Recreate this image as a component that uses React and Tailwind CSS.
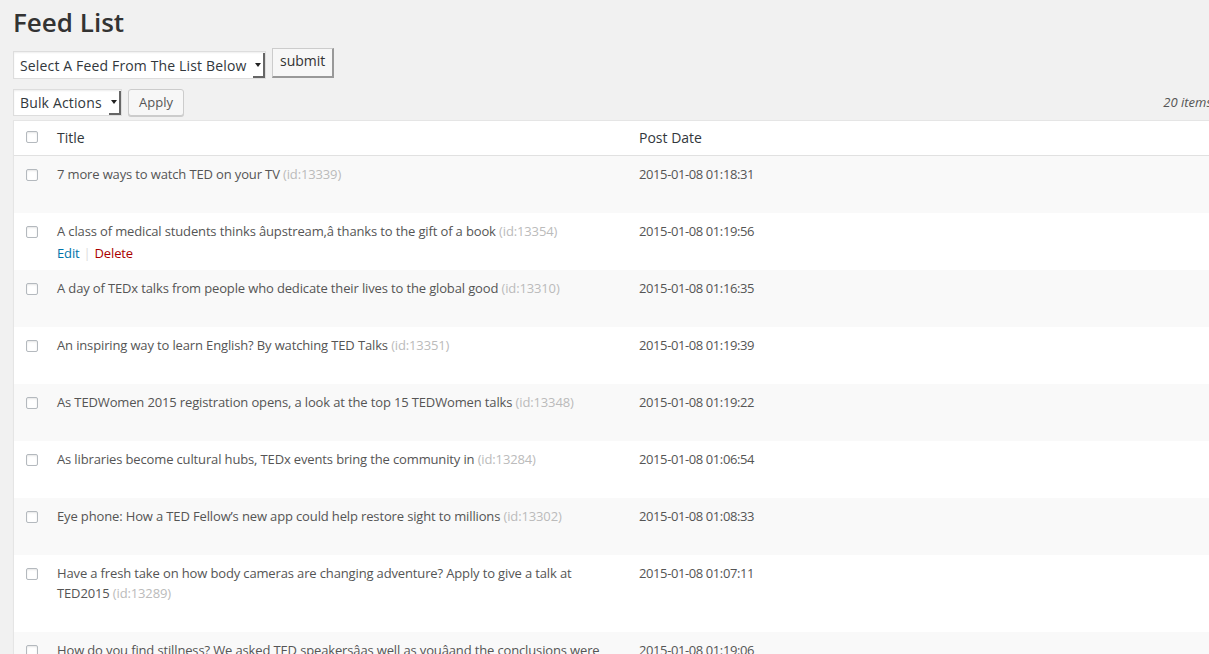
import { useState } from "react";

const feeds = [
  { title: "7 more ways to watch TED on your TV", id: 13339, date: "2015-01-08 01:18:31" },
  { title: "A class of medical students thinks âupstream,â thanks to the gift of a book", id: 13354, date: "2015-01-08 01:19:56", hover: true },
  { title: "A day of TEDx talks from people who dedicate their lives to the global good", id: 13310, date: "2015-01-08 01:16:35" },
  { title: "An inspiring way to learn English? By watching TED Talks", id: 13351, date: "2015-01-08 01:19:39" },
  { title: "As TEDWomen 2015 registration opens, a look at the top 15 TEDWomen talks", id: 13348, date: "2015-01-08 01:19:22" },
  { title: "As libraries become cultural hubs, TEDx events bring the community in", id: 13284, date: "2015-01-08 01:06:54" },
  { title: "Eye phone: How a TED Fellow’s new app could help restore sight to millions", id: 13302, date: "2015-01-08 01:08:33" },
  { title: "Have a fresh take on how body cameras are changing adventure? Apply to give a talk at TED2015", id: 13289, date: "2015-01-08 01:07:11" },
  { title: "How do you find stillness? We asked TED speakersâas well as youâand the conclusions were surprising", id: 13347, date: "2015-01-08 01:19:06" },
];

function Check() {
  return (
    <span className="block w-[12px] h-[12px] border border-[#b4b9be] rounded-[2px] bg-white shadow-[inset_0_1px_2px_rgba(0,0,0,0.1)]" />
  );
}

function FakeSelect({ label, width, height }) {
  return (
    <div className={`flex items-stretch bg-white border border-[#ddd] shadow-[inset_0_1px_2px_rgba(0,0,0,0.07)] ${width} ${height}`}>
      <span className="flex-1 pl-[6px] flex items-center text-[14px] tracking-[0.15px] text-[#32373c] whitespace-nowrap">{label}</span>
      <span className="w-[12px] flex items-center justify-center border-r-2 border-b-2 border-[#666] mt-[1px]">
        <svg width="6" height="4" viewBox="0 0 6 4">
          <path d="M0 0h6L3 4z" fill="#222" />
        </svg>
      </span>
    </div>
  );
}

export default function App() {
  const [rows] = useState(feeds);

  return (
    <div className="w-[1209px] h-[654px] overflow-hidden bg-[#f1f1f1] font-['Open_Sans',sans-serif] text-[#444]">
      <div className="ml-[13px] w-[1199px]">
        <h2 className="pt-[8px] text-[26px] leading-[29px] font-semibold text-[#333]">Feed List</h2>

        <div className="mt-[11px] flex items-start gap-[6px]">
          <div className="mt-[3px]">
            <FakeSelect label="Select A Feed From The List Below" width="w-[253px]" height="h-[28px]" />
          </div>
          <button className="h-[30px] px-[7px] bg-[#f7f7f7] border border-[#ccc] border-r-2 border-r-[#999] border-b-2 border-b-[#999] text-[14px] text-[#333] leading-none pb-[4px]">
            submit
          </button>
        </div>

        <div className="mt-[10px] flex items-center h-[27px]">
          <FakeSelect label="Bulk Actions" width="w-[109px]" height="h-[27px]" />
          <button className="ml-[6px] w-[56px] h-[27px] bg-[#f7f7f7] border border-[#ccc] rounded-[3px] shadow-[0_1px_0_#ccc] text-[13px] text-[#555]">
            Apply
          </button>
          <span className="ml-auto text-[13px] italic text-[#555]">20 items</span>
        </div>

        <div className="mt-[4px] bg-white border border-[#e5e5e5] shadow-[0_1px_1px_rgba(0,0,0,0.04)]">
          <div className="flex items-center h-[35px] pb-[2px] border-b border-[#e1e1e1]">
            <div className="w-[43px] pl-[12px]">
              <Check />
            </div>
            <div className="w-[582px] text-[14px] text-[#32373c]">Title</div>
            <div className="text-[14px] text-[#32373c]">Post Date</div>
          </div>

          {rows.map((row, i) => (
            <div key={row.id} className={`flex pt-[8px] pb-[8px] ${i % 2 === 0 ? "bg-[#f9f9f9]" : "bg-white"}`}>
              <div className="w-[43px] pl-[12px] pt-[5px]">
                <Check />
              </div>
              <div className="w-[582px] pr-[12px] text-[13px] leading-[20px] tracking-[-0.14px] text-[#555]">
                <div>
                  {row.title} <span className="text-[#bbb]">(id:{row.id})</span>
                </div>
                <div className="h-[21px] pt-[2px] leading-[20px]">
                  {row.hover && (
                    <span>
                      <a className="text-[#0073aa]">Edit</a>
                      <span className="text-[#ddd] mx-[4px]">|</span>
                      <a className="text-[#a00]">Delete</a>
                    </span>
                  )}
                </div>
              </div>
              <div className="text-[13px] leading-[20px] tracking-[-0.4px] text-[#555]">{row.date}</div>
            </div>
          ))}
        </div>
      </div>
    </div>
  );
}
